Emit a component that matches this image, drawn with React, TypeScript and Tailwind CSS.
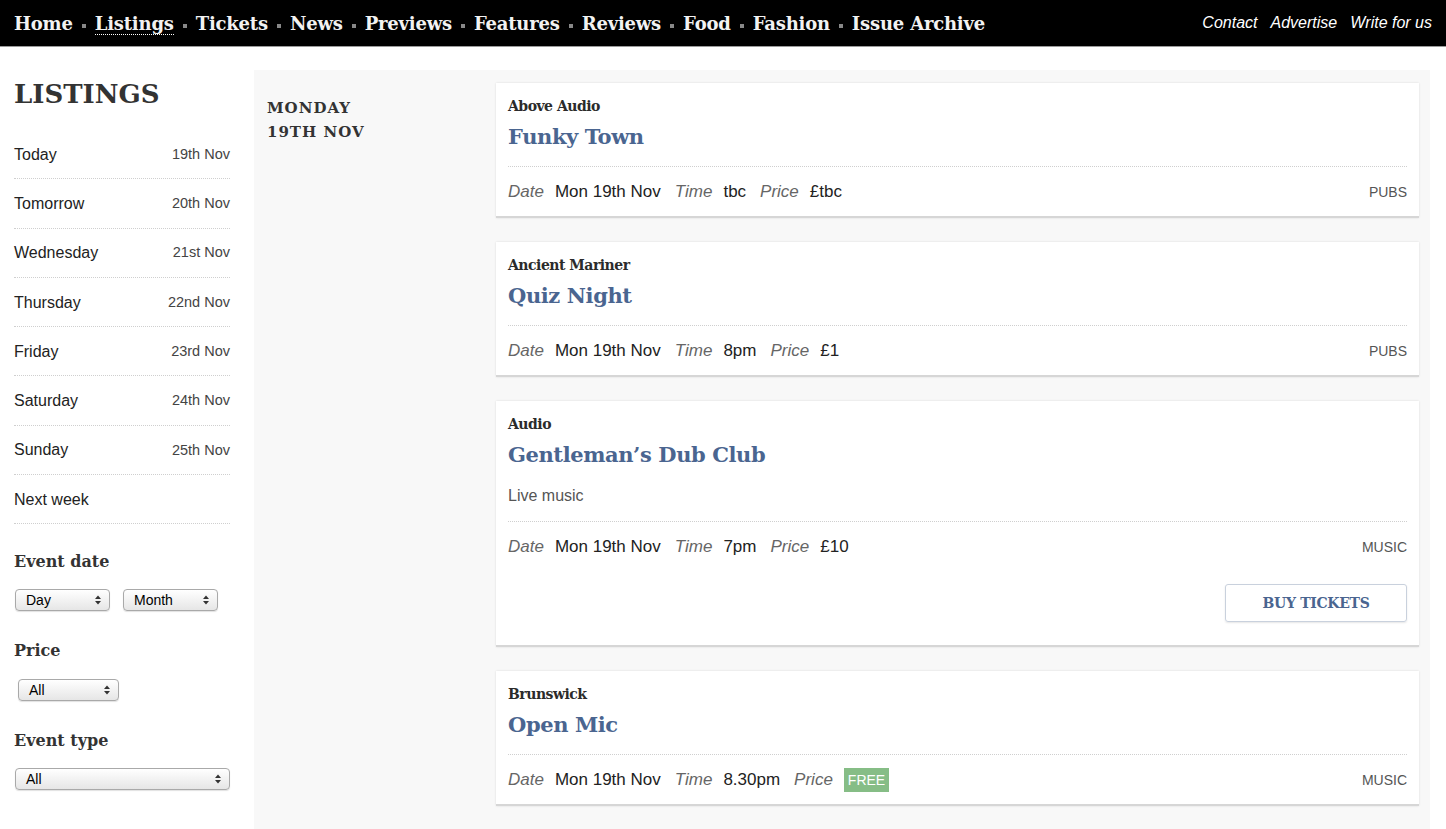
import React from 'react';

const slab = "font-['DejaVu_Serif',serif]";
const sans = "font-['Liberation_Sans',Arial,sans-serif]";

const navLinks = ['Home', 'Listings', 'Tickets', 'News', 'Previews', 'Features', 'Reviews', 'Food', 'Fashion', 'Issue Archive'];

const days = [
  ['Today', '19th Nov'],
  ['Tomorrow', '20th Nov'],
  ['Wednesday', '21st Nov'],
  ['Thursday', '22nd Nov'],
  ['Friday', '23rd Nov'],
  ['Saturday', '24th Nov'],
  ['Sunday', '25th Nov'],
  ['Next week', ''],
];

type Ev = {
  venue: string;
  title: string;
  desc?: string;
  time: string;
  price: string;
  free?: boolean;
  type: string;
  tickets?: boolean;
};

const events: Ev[] = [
  { venue: 'Above Audio', title: 'Funky Town', time: 'tbc', price: '£tbc', type: 'PUBS' },
  { venue: 'Ancient Mariner', title: 'Quiz Night', time: '8pm', price: '£1', type: 'PUBS' },
  { venue: 'Audio', title: 'Gentleman\u2019s Dub Club', desc: 'Live music', time: '7pm', price: '£10', type: 'MUSIC', tickets: true },
  { venue: 'Brunswick', title: 'Open Mic', time: '8.30pm', price: '', free: true, type: 'MUSIC' },
];

function FakeSelect({ label, w }: { label: string; w: string }) {
  return (
    <div
      className={`${w} h-[22px] flex items-center justify-between pl-[10px] pr-[8px] border border-[#a9a9a9] rounded-[4px] bg-gradient-to-b from-white to-[#e6e6e6] shadow-[0_1px_1px_rgba(0,0,0,0.12)] text-[14px] text-black ${sans}`}
    >
      <span>{label}</span>
      <svg width="6" height="10" viewBox="0 0 6 10">
        <path d="M0 4 L3 0.5 L6 4 Z" fill="#333" />
        <path d="M0 6 L3 9.5 L6 6 Z" fill="#333" />
      </svg>
    </div>
  );
}

function Meta({ label, value }: { label: string; value: React.ReactNode }) {
  return (
    <>
      <span className="italic text-[#666] mr-[11px]">{label}</span>
      <span className="text-[#222] mr-[14px]">{value}</span>
    </>
  );
}

function EventCard({ ev }: { ev: Ev }) {
  return (
    <div className="bg-white border-b-2 border-[#d6d6d6] shadow-[0_0_2px_rgba(0,0,0,0.12)] px-[12px] pt-[13px] pb-[12px]">
      <div className={`${slab} text-[14px] font-bold leading-[20px] text-[#2b2b2b] tracking-[-0.5px]`}>{ev.venue}</div>
      <div className={`${slab} mt-[6px] text-[21px] font-bold leading-[30px] text-[#4a6590] tracking-[-0.4px]`}>{ev.title}</div>
      {ev.desc && <div className={`${sans} mt-[14px] text-[16px] leading-[24px] text-[#555]`}>{ev.desc}</div>}
      <div className={`border-t border-dotted border-[#cfcfcf] ${ev.desc ? 'mt-[13px]' : 'mt-[14px]'}`} />
      <div className={`${sans} mt-[13px] flex items-center text-[17px] leading-[24px]`}>
        <Meta label="Date" value="Mon 19th Nov" />
        <Meta label="Time" value={ev.time} />
        <span className="italic text-[#666] mr-[11px]">Price</span>
        {ev.free ? (
          <span className="bg-[#86bd86] text-white text-[14px] leading-[24px] px-[4px]">FREE</span>
        ) : (
          <span className="text-[#222]">{ev.price}</span>
        )}
        <span className="ml-auto text-[14px] text-[#555]">{ev.type}</span>
      </div>
      {ev.tickets && (
        <div className="flex justify-end mt-[25px] mb-[11px]">
          <button
            className={`${slab} w-[182px] h-[38px] border border-[#c9d1dd] rounded-[3px] shadow-[0_1px_2px_rgba(0,0,0,0.1)] text-[14px] font-bold text-[#4a6590] tracking-[-0.3px]`}
          >
            BUY TICKETS
          </button>
        </div>
      )}
    </div>
  );
}

export default function App() {
  return (
    <div className="min-h-screen bg-white w-[1446px]">
      {/* top nav */}
      <div className="h-[47px] bg-black border-b border-[#9a9a9a] flex items-center justify-between px-[14px]">
        <nav className={`${slab} flex items-center pt-[2px] text-[18px] font-bold text-[#f2f2f2] tracking-[-0.2px]`}>
          {navLinks.map((l, i) => (
            <React.Fragment key={l}>
              {i > 0 && <span className="mx-[9px] inline-block w-[4px] h-[4px] bg-[#888] mt-[4px]" />}
              <span className={l === 'Listings' ? 'border-b border-dotted border-white leading-[20px]' : 'leading-[20px]'}>{l}</span>
            </React.Fragment>
          ))}
        </nav>
        <div className={`${sans} flex gap-[13px] italic text-[16px] text-white`}>
          <span>Contact</span>
          <span>Advertise</span>
          <span>Write for us</span>
        </div>
      </div>

      <div className="flex">
        {/* sidebar */}
        <aside className="w-[216px] ml-[14px] pt-[22px]">
          <h1 className={`${slab} text-[26px] font-bold leading-[50px] text-[#333]`}>LISTINGS</h1>
          <ul className={`${sans} mt-[11px]`}>
            {days.map(([d, dt]) => (
              <li key={d} className="h-[49.3px] flex items-center justify-between border-b border-dotted border-[#cfcfcf] pt-[1px]">
                <span className="text-[16px] text-[#222]">{d}</span>
                <span className="text-[14.5px] text-[#444]">{dt}</span>
              </li>
            ))}
          </ul>
          <h3 className={`${slab} mt-[26px] text-[16px] font-bold leading-[24px] text-[#333]`}>Event date</h3>
          <div className="mt-[15px] flex gap-[13px] ml-[1px]">
            <FakeSelect label="Day" w="w-[95px]" />
            <FakeSelect label="Month" w="w-[95px]" />
          </div>
          <h3 className={`${slab} mt-[28px] text-[16px] font-bold leading-[24px] text-[#333]`}>Price</h3>
          <div className="mt-[16px] ml-[4px]">
            <FakeSelect label="All" w="w-[101px]" />
          </div>
          <h3 className={`${slab} mt-[28px] text-[16px] font-bold leading-[24px] text-[#333]`}>Event type</h3>
          <div className="mt-[15px] ml-[1px]">
            <FakeSelect label="All" w="w-[215px]" />
          </div>
        </aside>

        {/* main panel */}
        <main className="ml-[24px] mt-[23px] w-[1176px] bg-[#f8f8f8] flex min-h-[760px]">
          <div className="w-[242px] pl-[13px] pt-[26px]">
            <div className={`${slab} text-[15px] font-bold leading-[24px] text-[#333] tracking-[1px]`}>
              MONDAY
              <br />
              19TH NOV
            </div>
          </div>
          <div className="w-[923px] pt-[13px] flex flex-col gap-[24px]">
            {events.map((ev) => (
              <EventCard key={ev.title} ev={ev} />
            ))}
          </div>
        </main>
      </div>
    </div>
  );
}
